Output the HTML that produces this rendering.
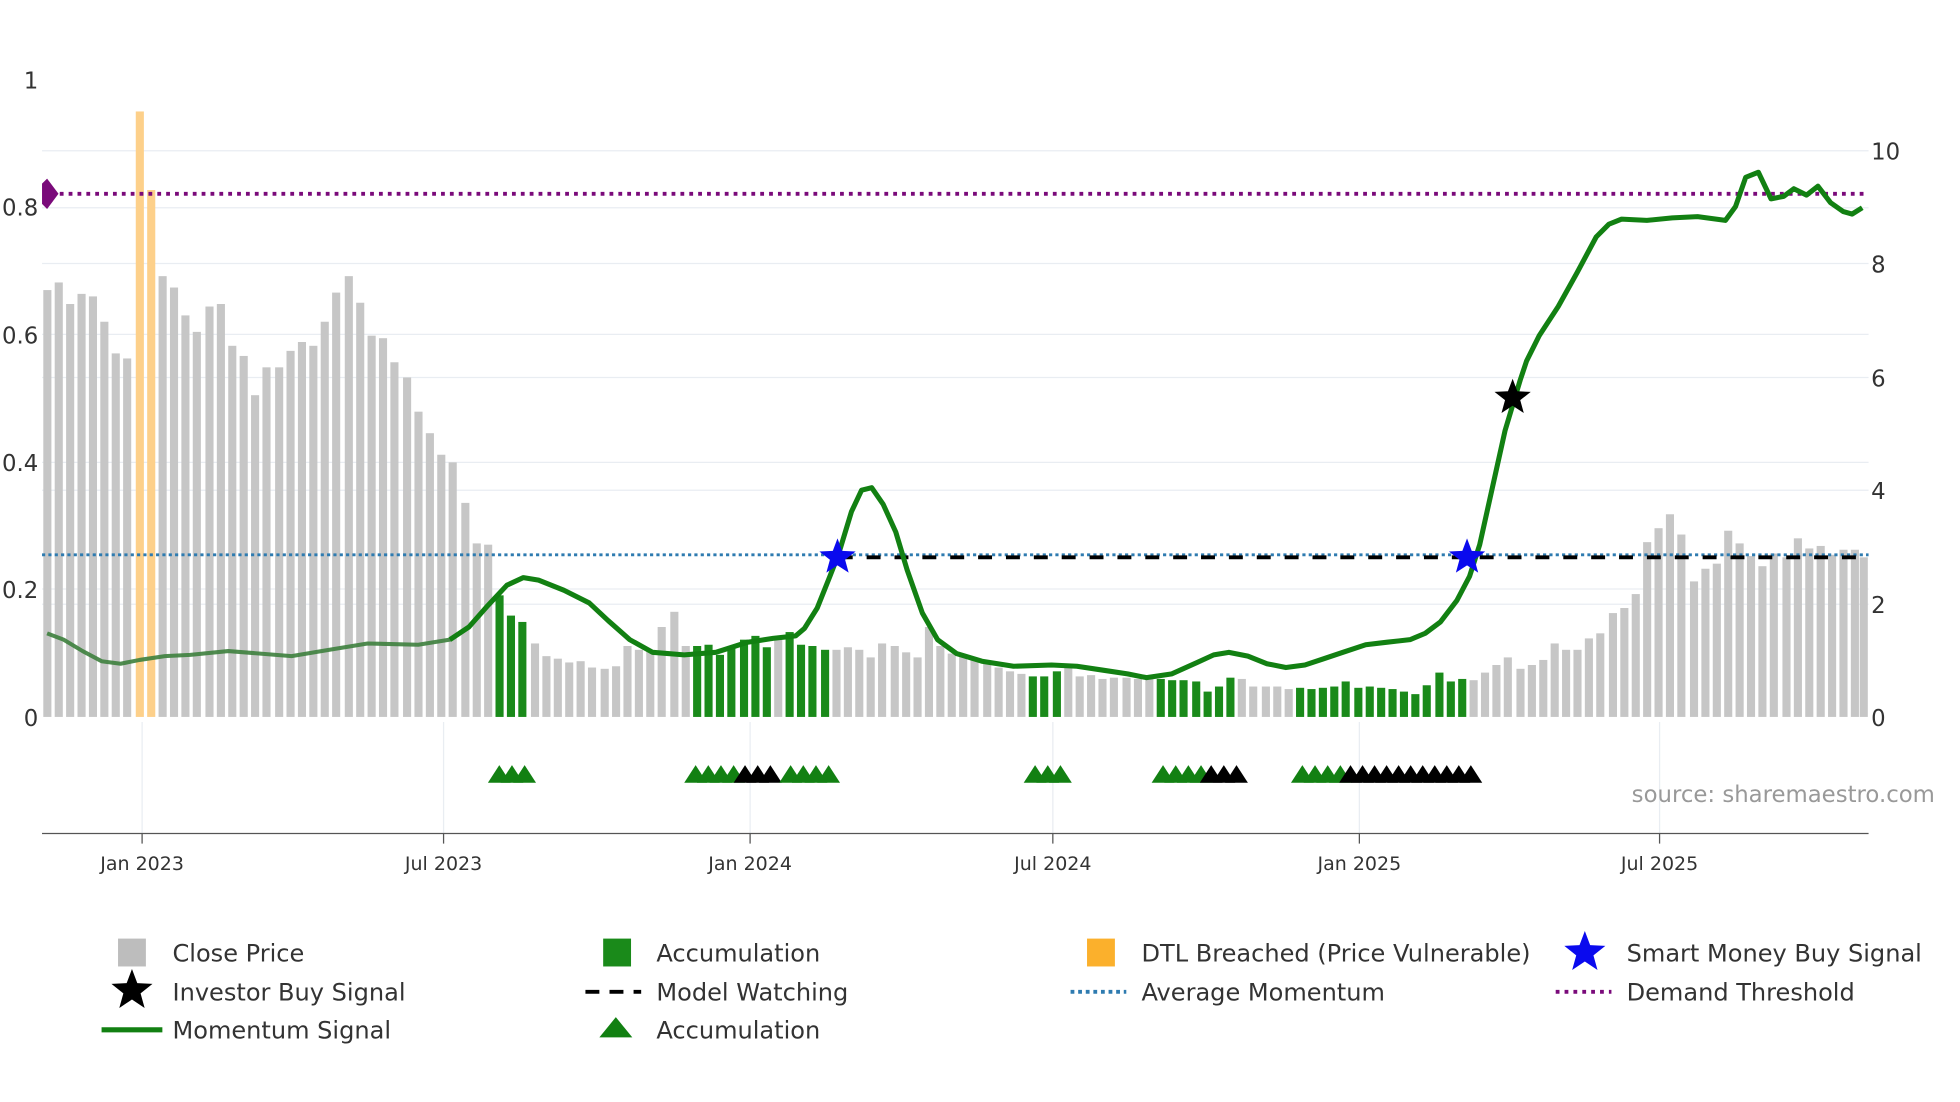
<!DOCTYPE html>
<html><head><meta charset="utf-8"><style>
html,body{margin:0;padding:0;background:#fff;}
svg{display:block;font-family:"DejaVu Sans","Liberation Sans",sans-serif;}
</style></head><body>
<svg id="s" width="1960" height="1102" viewBox="0 0 1547 870" xmlns="http://www.w3.org/2000/svg">
<rect width="1547" height="870" fill="#fff"/>
<g stroke="#e9edf2" stroke-width="1">
<line x1="33" x2="1475" y1="119" y2="119"/><line x1="33" x2="1475" y1="164" y2="164"/>
<line x1="33" x2="1475" y1="208" y2="208"/><line x1="33" x2="1475" y1="264" y2="264"/>
<line x1="33" x2="1475" y1="298" y2="298"/><line x1="33" x2="1475" y1="365" y2="365"/>
<line x1="33" x2="1475" y1="387" y2="387"/><line x1="33" x2="1475" y1="465" y2="465"/>
<line x1="33" x2="1475" y1="477" y2="477"/>
<line x1="112" x2="112" y1="570" y2="658"/><line x1="350" x2="350" y1="570" y2="658"/>
<line x1="592" x2="592" y1="570" y2="658"/><line x1="831" x2="831" y1="570" y2="658"/>
<line x1="1073" x2="1073" y1="570" y2="658"/><line x1="1310" x2="1310" y1="570" y2="658"/>
</g>
<g id="bars"></g>
<polyline id="ml1" fill="none" stroke="#3d7f3d" stroke-width="3.2" stroke-linejoin="round" opacity="0.9"/>
<line x1="33" x2="1475" y1="438" y2="438" stroke="#2e7bb0" stroke-width="2.2" stroke-dasharray="2.5,2.5"/>
<line x1="662" x2="1472" y1="440" y2="440" stroke="#000" stroke-width="3" stroke-dasharray="11,11"/>
<line x1="40" x2="1472" y1="153" y2="153" stroke="#7a0a7a" stroke-width="3" stroke-dasharray="3,4"/>
<polygon points="33,145 37,141 46,153 37,165 33,161" fill="#7a0a7a"/>
<polyline id="ml2" fill="none" stroke="#128012" stroke-width="4" stroke-linejoin="round"/>
<g id="stars"></g>
<g id="tris"></g>
<line x1="33" x2="1475" y1="658" y2="658" stroke="#555" stroke-width="1"/>
<g stroke="#555"><line x1="112" x2="112" y1="658" y2="666"/><line x1="350" x2="350" y1="658" y2="666"/><line x1="592" x2="592" y1="658" y2="666"/><line x1="831" x2="831" y1="658" y2="666"/><line x1="1073" x2="1073" y1="658" y2="666"/><line x1="1310" x2="1310" y1="658" y2="666"/></g>
<g font-size="15" fill="#333" text-anchor="middle">
<text x="112" y="687">Jan 2023</text><text x="350" y="687">Jul 2023</text><text x="592" y="687">Jan 2024</text><text x="831" y="687">Jul 2024</text><text x="1073" y="687">Jan 2025</text><text x="1310" y="687">Jul 2025</text>
</g>
<g font-size="18" fill="#333" text-anchor="end">
<text x="30" y="70">1</text><text x="30" y="170">0.8</text><text x="30" y="271">0.6</text><text x="30" y="372">0.4</text><text x="30" y="472">0.2</text><text x="30" y="573">0</text>
</g>
<g font-size="18" fill="#333">
<text x="1477" y="126">10</text><text x="1477" y="215">8</text><text x="1477" y="305">6</text><text x="1477" y="394">4</text><text x="1477" y="484">2</text><text x="1477" y="573">0</text>
</g>
<text x="1288" y="633" font-size="18" fill="#999">source: sharemaestro.com</text>
<g font-size="19" fill="#333">
<rect x="93" y="741" width="22" height="22" fill="#bdbdbd"/><text x="136" y="759">Close Price</text>
<rect x="476" y="741" width="22" height="22" fill="#1a8a1a"/><text x="518" y="759">Accumulation</text>
<rect x="858" y="741" width="22" height="22" fill="#fbb02c"/><text x="901" y="759">DTL Breached (Price Vulnerable)</text>
<text x="1284" y="759">Smart Money Buy Signal</text>
<text x="136" y="790">Investor Buy Signal</text>
<line x1="462" x2="506" y1="783" y2="783" stroke="#000" stroke-width="3" stroke-dasharray="11,8"/><text x="518" y="790">Model Watching</text>
<line x1="845" x2="889" y1="783" y2="783" stroke="#2e7bb0" stroke-width="3" stroke-dasharray="3,3"/><text x="901" y="790">Average Momentum</text>
<line x1="1228" x2="1272" y1="783" y2="783" stroke="#7a0a7a" stroke-width="3" stroke-dasharray="3,4"/><text x="1284" y="790">Demand Threshold</text>
<line x1="80" x2="128" y1="813" y2="813" stroke="#128012" stroke-width="4"/><text x="136" y="820">Momentum Signal</text>
<polygon points="486,803 499,819 473,819" fill="#128012"/><text x="518" y="820">Accumulation</text>
</g>
<g id="lstars"></g>
</svg>
<script>
var NS="http://www.w3.org/2000/svg";
function el(t,a,p){var e=document.createElementNS(NS,t);for(var k in a)e.setAttribute(k,a[k]);document.getElementById(p).appendChild(e);return e;}
var d="37:229,46:223,55:240,64:232,73:234,82:254,91:279,100:283,110:o88,119:o150,128:218,137:227,146:249,155:262,165:242,174:240,183:273,192:281,201:312,210:290,220:290,229:277,238:270,247:273,256:254,265:231,275:218,284:239,293:265,302:267,311:286,321:298,330:325,339:342,348:359,357:365,367:397,376:429,385:430,394:g470,403:g486,412:g491,422:508,431:518,440:520,449:523,458:522,467:527,477:528,486:526,495:510,504:513,513:514,522:495,532:483,541:510,550:g510,559:g509,568:g517,577:g510,587:g505,596:g502,605:g511,614:505,623:g499,632:g509,641:g510,651:g513,660:513,669:511,678:513,687:519,696:508,706:510,715:515,724:519,733:495,742:510,751:516,760:518,769:521,779:523,788:527,797:530,806:532,815:g534,824:g534,834:g530,843:525,852:534,861:533,870:536,879:535,889:535,898:536,907:535,916:g536,925:g537,934:g537,944:g538,953:g546,962:g542,971:g535,980:536,989:542,999:542,1008:542,1017:544,1026:g543,1035:g544,1044:g543,1053:g542,1062:g538,1072:g543,1081:g542,1090:g543,1099:g544,1108:g546,1117:g548,1126:g541,1136:g531,1145:g538,1154:g536,1163:537,1172:531,1181:525,1190:519,1200:528,1209:525,1218:521,1227:508,1236:513,1245:513,1254:504,1263:500,1273:484,1282:480,1291:469,1300:428,1309:417,1318:406,1327:422,1337:459,1346:449,1355:445,1364:419,1373:429,1382:439,1391:447,1400:437,1410:440,1419:425,1428:433,1437:431,1446:438,1455:434,1464:434,1471:440";
d.split(",").forEach(function(s){var p=s.split(":"),x=+p[0],v=p[1],c="#c6c6c6";
if(v[0]=="g"){c="#1a8a1a";v=v.slice(1);}else if(v[0]=="o"){c="#fdd08a";v=v.slice(1);}
var y=+v;el("rect",{x:x-3,y:y,width:6.4,height:566-y,fill:c},"bars");});
var pts="37,500 50,505 65,514 80,522 95,524 110,521 130,518 150,517 180,514 230,518 260,513 290,508 330,509 355,505 370,495 385,478 400,462 413,456 425,458 445,466 465,476 480,490 497,505 515,515 540,517 565,515 590,507 610,504 628,502 635,496 645,480 655,455 662,437 672,404 680,387 688,385 697,398 707,420 716,450 728,484 740,505 755,516 775,522 800,526 830,525 850,526 870,529 890,532 905,535 925,532 945,523 958,517 970,515 985,518 1000,524 1015,527 1030,525 1045,520 1060,515 1078,509 1095,507 1113,505 1125,500 1137,491 1150,474 1160,455 1168,430 1178,385 1188,340 1200,300 1205,285 1215,265 1230,242 1245,215 1260,187 1270,177 1280,173 1300,174 1320,172 1340,171 1362,174 1370,163 1378,140 1388,136 1398,157 1408,155 1416,149 1426,154 1435,147 1445,160 1455,167 1462,169 1470,164".split(" ");
var a=[],b=[];pts.forEach(function(p){var x=+p.split(",")[0];if(x<=370)a.push(p);if(x>=355)b.push(p);});
document.getElementById("ml1").setAttribute("points",a.join(" "));
document.getElementById("ml2").setAttribute("points",b.join(" "));
function star(cx,cy,r,c,g){var s=[];for(var i=0;i<10;i++){var ang=-Math.PI/2+i*Math.PI/5,rr=i%2?r*0.42:r;s.push((cx+rr*Math.cos(ang)).toFixed(1)+","+(cy+rr*Math.sin(ang)).toFixed(1));}el("polygon",{points:s.join(" "),fill:c},g);}
star(661,440,15,"#0a0aee","stars");star(1158,440,15,"#0a0aee","stars");star(1194,314,15,"#000","stars");
star(1251,752,17,"#0a0aee","lstars");star(104,782,17,"#000","lstars");
function tris(x0,n,c,step){for(var i=0;i<n;i++){var x=x0+i*step;el("polygon",{points:(x)+",604 "+(x+9)+",618 "+(x-9)+",618",fill:c},"tris");}}
tris(394,3,"#128012",10);
tris(549,4,"#128012",10);tris(588,3,"#000",10);tris(624,4,"#128012",10);
tris(817,3,"#128012",10);
tris(918,4,"#128012",10);tris(956,3,"#000",10);
tris(1028,4,"#128012",10);tris(1066,11,"#000",9.5);
</script>
</body></html>
